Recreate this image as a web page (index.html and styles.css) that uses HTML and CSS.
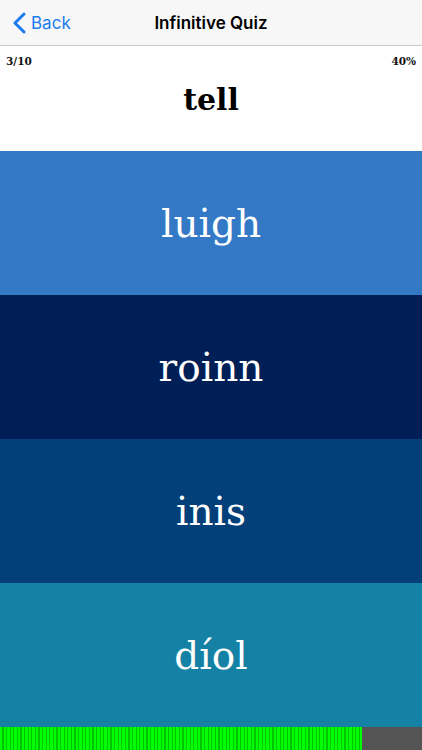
FILE: index.html
```html
<!DOCTYPE html>
<html>
<head>
<meta charset="utf-8">
<link rel="stylesheet" href="styles.css">
</head>
<body>
<div class="app">
  <header class="nav">
    <div class="back">
      <svg class="chev" width="13" height="22" viewBox="0 0 13 22"><path d="M11 2 L2 11 L11 20" fill="none" stroke="#1b7cf0" stroke-width="3" stroke-linecap="round" stroke-linejoin="round"/></svg>
      <span>Back</span>
    </div>
    <div class="title">Infinitive Quiz</div>
  </header>
  <section class="question">
    <div class="stats"><span>3/10</span><span>40%</span></div>
    <div class="word">tell</div>
  </section>
  <div class="answer a1">luigh</div>
  <div class="answer a2">roinn</div>
  <div class="answer a3">inis</div>
  <div class="answer a4">díol</div>
  <div class="progress"><div class="fill" style="width:362px"></div></div>
</div>
</body>
</html>
```
FILE: styles.css
```css
html, body { margin: 0; padding: 0; }
body { width: 422px; height: 750px; overflow: hidden; background: #fff; font-family: "Liberation Sans", Arial, sans-serif; }
.app { display: flex; flex-direction: column; height: 750px; }
.nav { position: relative; height: 45px; background: #f7f7f7; border-bottom: 1px solid #c9c9c9; display: flex; align-items: center; justify-content: center; flex-shrink: 0; }
.back { position: absolute; left: 13px; top: 0; height: 45px; display: flex; align-items: center; gap: 5px; color: #1b7cf0; font-size: 17px; font-family: "Inter", "Liberation Sans", sans-serif; }
.chev { display: block; }
.title { font-family: "Inter", "Liberation Sans", sans-serif; font-weight: 600; font-size: 17px; color: #000; }
.question { height: 105px; flex-shrink: 0; display: flex; flex-direction: column; }
.stats { display: flex; justify-content: space-between; padding: 9px 6px 0 6px; font-family: "DejaVu Serif", serif; font-weight: bold; font-size: 10.5px; color: #111; }
.word { text-align: center; font-family: "DejaVu Serif", serif; font-weight: bold; font-size: 30px; color: #000; margin-top: 15px; }
.answer { height: 144px; flex-shrink: 0; display: flex; align-items: center; justify-content: center; color: #fff; font-family: "DejaVu Serif", serif; font-size: 39px; font-weight: 300; }
.a1 { background: #3379c6; }
.a2 { background: #001f57; }
.a3 { background: #033f78; }
.a4 { background: #1581a5; }
.progress { flex: 1; background: #545454; display: flex; }
.fill { height: 100%; background: repeating-linear-gradient(90deg, #00ff00 0px, #00ff00 2.4px, #00c400 2.4px, #00c400 3.6px); }
```
